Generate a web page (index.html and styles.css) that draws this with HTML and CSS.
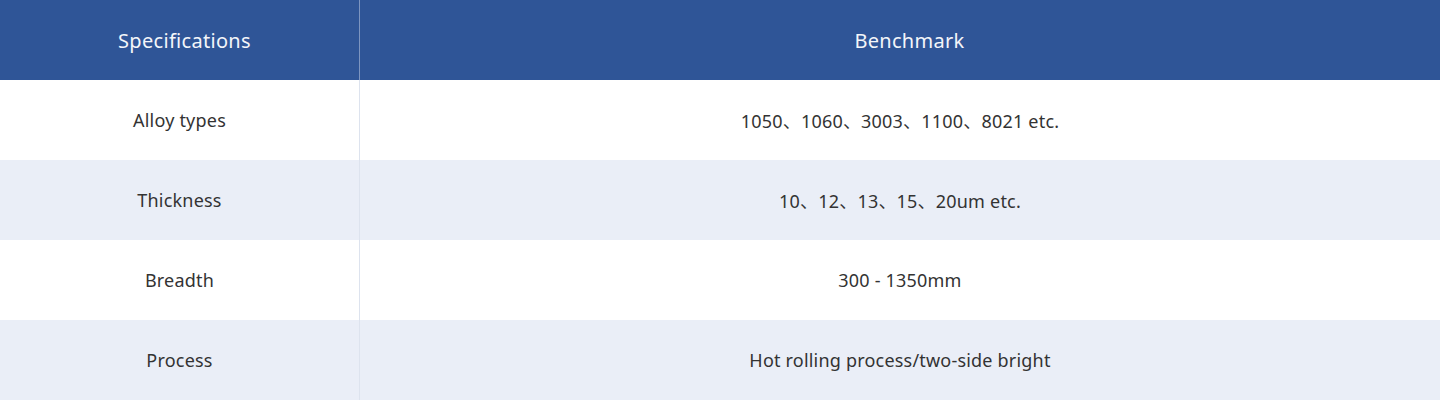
FILE: index.html
```html
<!DOCTYPE html>
<html>
<head>
<meta charset="utf-8">
<link rel="stylesheet" href="styles.css">
</head>
<body>
<table class="spec">
  <thead>
    <tr><th class="c1">Specifications</th><th class="c2">Benchmark</th></tr>
  </thead>
  <tbody>
    <tr><td class="c1">Alloy types</td><td class="c2">1050、1060、3003、1100、8021 etc.</td></tr>
    <tr class="alt"><td class="c1">Thickness</td><td class="c2">10、12、13、15、20um etc.</td></tr>
    <tr><td class="c1">Breadth</td><td class="c2">300 - 1350mm</td></tr>
    <tr class="alt"><td class="c1">Process</td><td class="c2">Hot rolling process/two-side bright</td></tr>
  </tbody>
</table>
</body>
</html>
```
FILE: styles.css
```css
html, body { margin: 0; padding: 0; background: #fff; }
.spec {
  width: 1440px;
  border-collapse: collapse;
  table-layout: fixed;
  font-family: "Noto Sans", "Noto Sans CJK SC", sans-serif;
  font-size: 18px;
  letter-spacing: 0.2px;
  color: #333;
}
.spec th, .spec td {
  height: 80px;
  padding: 0;
  text-align: center;
  vertical-align: middle;
  font-weight: 400;
}
.spec th {
  background: #2f5597;
  color: #f4f6fa;
  font-size: 20px;
  letter-spacing: 0.3px;
}
.spec th.c1 { text-indent: 10px; }
.spec th.c2 { text-indent: 19px; }
.spec .c1 { width: 359px; border-right: 1px solid #dde3ee; }
.spec th.c1 { border-right-color: #7d95c0; }
.spec tr.alt td { background: #eaeef7; }
```
